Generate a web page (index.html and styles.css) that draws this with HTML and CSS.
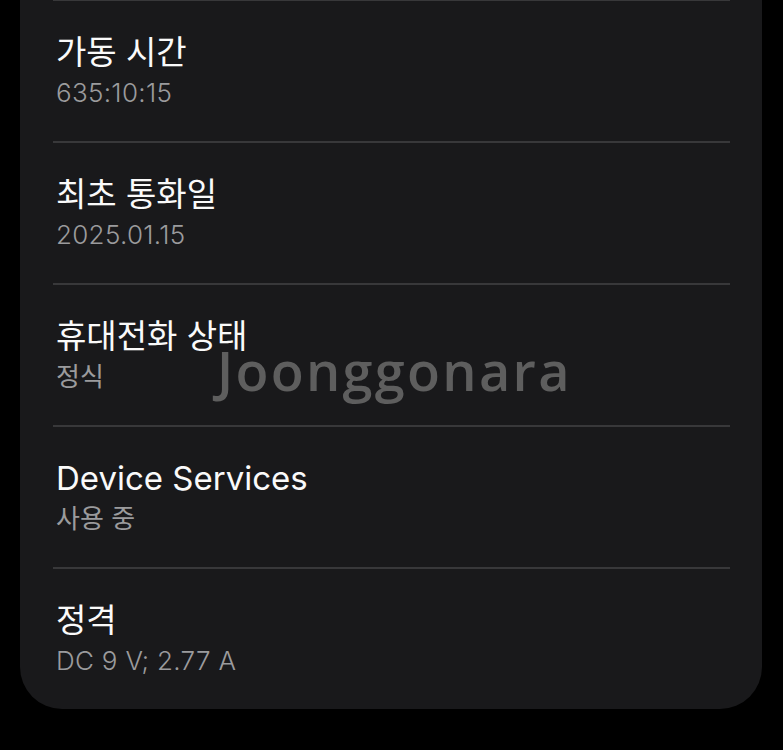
FILE: index.html
```html
<!DOCTYPE html>
<html lang="ko">
<head>
<meta charset="utf-8">
<title>휴대전화 정보</title>
<link rel="stylesheet" href="styles.css">
</head>
<body>
<div class="page">
  <div class="card">
    <div class="row">
      <div class="title">가동 시간</div>
      <div class="sub">635:10:15</div>
    </div>
    <div class="row">
      <div class="title">최초 통화일</div>
      <div class="sub">2025.01.15</div>
    </div>
    <div class="row">
      <div class="title">휴대전화 상태</div>
      <div class="sub ko">정식</div>
    </div>
    <div class="row">
      <div class="title">Device Services</div>
      <div class="sub ko">사용 중</div>
    </div>
    <div class="row">
      <div class="title">정격</div>
      <div class="sub">DC 9 V; 2.77 A</div>
    </div>
  </div>
  <div class="watermark">Joonggonara</div>
</div>
</body>
</html>
```

FILE: styles.css
```css
html, body {
  margin: 0;
  padding: 0;
  background: #000;
}
body {
  width: 783px;
  height: 750px;
  overflow: hidden;
  font-family: Inter, "Noto Sans CJK KR", sans-serif;
}
.page {
  position: relative;
  padding: 0 21px 0 20px;
}
.card {
  background: #19191b;
  border-radius: 0 0 42px 42px;
  padding: 0 32px 0 33px;
  margin-top: -1px;
}
.row {
  border-top: 2px solid #38383a;
  height: 140px;
  box-sizing: content-box;
  padding-left: 3px;
}
.title {
  padding-top: 31px;
  font-size: 33px;
  line-height: 40px;
  color: #fafafa;
  font-weight: 400;
}
.sub {
  margin-top: 4px;
  font-size: 26px;
  line-height: 34px;
  color: #9b9b9d;
  font-weight: 300;
  letter-spacing: 0.3px;
}
.sub.ko {
  font-weight: 400;
  letter-spacing: 0;
}
.watermark {
  position: absolute;
  left: 217px;
  top: 336px;
  font-family: "Open Sans", sans-serif;
  font-weight: 600;
  font-size: 54px;
  line-height: 70px;
  letter-spacing: 2.3px;
  color: #5e5e5e;
}
```
